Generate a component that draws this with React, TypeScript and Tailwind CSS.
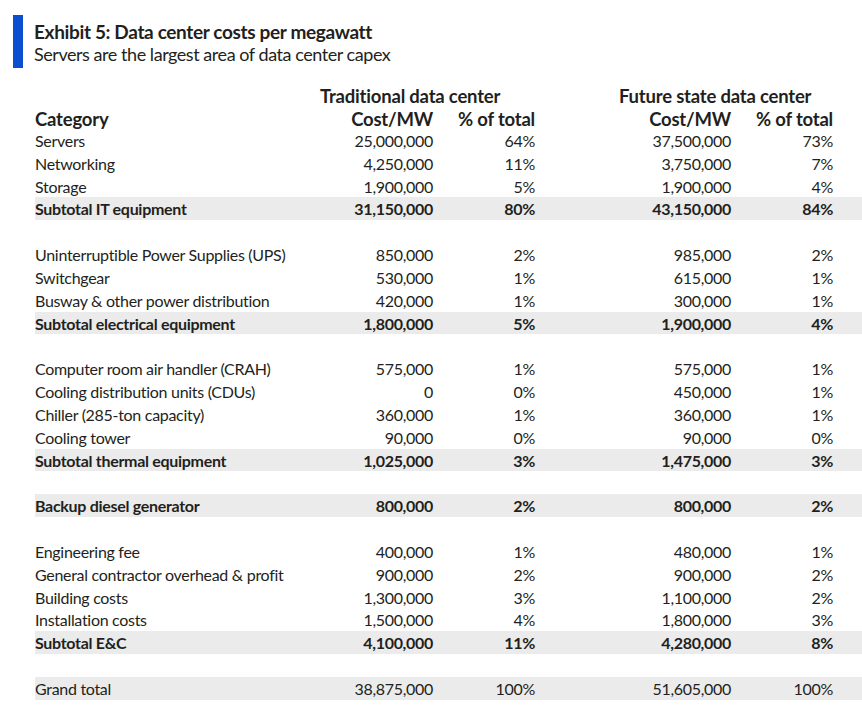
import React from 'react';

type Row =
  | { kind: 'item' | 'sub' | 'grand'; label: string; c1: string; p1: string; c2: string; p2: string }
  | { kind: 'blank' };

const rows: Row[] = [
  { kind: 'item', label: 'Servers', c1: '25,000,000', p1: '64%', c2: '37,500,000', p2: '73%' },
  { kind: 'item', label: 'Networking', c1: '4,250,000', p1: '11%', c2: '3,750,000', p2: '7%' },
  { kind: 'item', label: 'Storage', c1: '1,900,000', p1: '5%', c2: '1,900,000', p2: '4%' },
  { kind: 'sub', label: 'Subtotal IT equipment', c1: '31,150,000', p1: '80%', c2: '43,150,000', p2: '84%' },
  { kind: 'blank' },
  { kind: 'item', label: 'Uninterruptible Power Supplies (UPS)', c1: '850,000', p1: '2%', c2: '985,000', p2: '2%' },
  { kind: 'item', label: 'Switchgear', c1: '530,000', p1: '1%', c2: '615,000', p2: '1%' },
  { kind: 'item', label: 'Busway & other power distribution', c1: '420,000', p1: '1%', c2: '300,000', p2: '1%' },
  { kind: 'sub', label: 'Subtotal electrical equipment', c1: '1,800,000', p1: '5%', c2: '1,900,000', p2: '4%' },
  { kind: 'blank' },
  { kind: 'item', label: 'Computer room air handler (CRAH)', c1: '575,000', p1: '1%', c2: '575,000', p2: '1%' },
  { kind: 'item', label: 'Cooling distribution units (CDUs)', c1: '0', p1: '0%', c2: '450,000', p2: '1%' },
  { kind: 'item', label: 'Chiller (285-ton capacity)', c1: '360,000', p1: '1%', c2: '360,000', p2: '1%' },
  { kind: 'item', label: 'Cooling tower', c1: '90,000', p1: '0%', c2: '90,000', p2: '0%' },
  { kind: 'sub', label: 'Subtotal thermal equipment', c1: '1,025,000', p1: '3%', c2: '1,475,000', p2: '3%' },
  { kind: 'blank' },
  { kind: 'sub', label: 'Backup diesel generator', c1: '800,000', p1: '2%', c2: '800,000', p2: '2%' },
  { kind: 'blank' },
  { kind: 'item', label: 'Engineering fee', c1: '400,000', p1: '1%', c2: '480,000', p2: '1%' },
  { kind: 'item', label: 'General contractor overhead & profit', c1: '900,000', p1: '2%', c2: '900,000', p2: '2%' },
  { kind: 'item', label: 'Building costs', c1: '1,300,000', p1: '3%', c2: '1,100,000', p2: '2%' },
  { kind: 'item', label: 'Installation costs', c1: '1,500,000', p1: '4%', c2: '1,800,000', p2: '3%' },
  { kind: 'sub', label: 'Subtotal E&C', c1: '4,100,000', p1: '11%', c2: '4,280,000', p2: '8%' },
  { kind: 'blank' },
  { kind: 'grand', label: 'Grand total', c1: '38,875,000', p1: '100%', c2: '51,605,000', p2: '100%' },
];

const cols = 'grid grid-cols-[285px_113px_102px_84px_112px_107px]';

export default function App() {
  return (
    <div className="min-h-[705px] w-[862px] bg-white text-[#231f20] font-['Lato',sans-serif]">
      <div className="flex gap-[11px] pl-[13px] pt-[15px]">
        <div className="w-[10px] h-[53px] bg-[#0b4fd0]" />
        <div className="pt-[6px]">
          <h1 className="text-[19px] leading-[22px] font-bold tracking-[-0.35px]">Exhibit 5: Data center costs per megawatt</h1>
          <p className="text-[18px] leading-[23px] tracking-[-0.45px]">Servers are the largest area of data center capex</p>
        </div>
      </div>

      <div className="pl-[35px] pt-[15px]">
        <div className={`${cols} h-[23px] items-center text-[18.5px] font-bold tracking-[-0.2px]`}>
          <div />
          <div className="col-span-2 whitespace-nowrap">Traditional data center</div>
          <div />
          <div className="col-span-2 whitespace-nowrap">Future state data center</div>
        </div>
        <div className={`${cols} h-[23px] items-center text-[18.5px] font-bold tracking-[-0.2px]`}>
          <div>Category</div>
          <div className="text-right">Cost/MW</div>
          <div className="text-right">% of total</div>
          <div />
          <div className="text-right">Cost/MW</div>
          <div className="text-right pr-[5px]">% of total</div>
        </div>

        {rows.map((r, i) =>
          r.kind === 'blank' ? (
            <div key={i} className="h-[22.83px]" />
          ) : (
            <div
              key={i}
              className={`${cols} h-[22.83px] items-center text-[16px] tracking-[-0.3px] ${
                r.kind === 'item' ? '' : 'bg-[#ebebeb]'
              } ${r.kind === 'sub' ? 'font-bold' : ''}`}
            >
              <div className="whitespace-nowrap">{r.label}</div>
              <div className="text-right">{r.c1}</div>
              <div className="text-right">{r.p1}</div>
              <div />
              <div className="text-right">{r.c2}</div>
              <div className="text-right pr-[5px]">{r.p2}</div>
            </div>
          ),
        )}
      </div>
    </div>
  );
}
